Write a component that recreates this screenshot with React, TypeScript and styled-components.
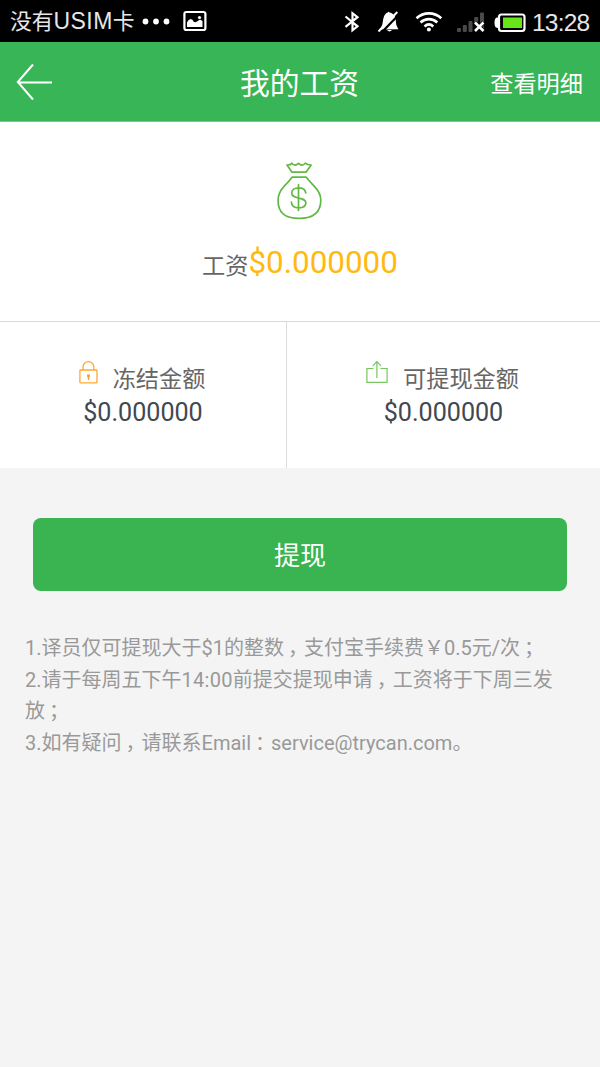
import React from "react";
import styled, { createGlobalStyle } from "styled-components";

const GlobalStyle = createGlobalStyle`
  * { box-sizing: border-box; }
  body {
    margin: 0;
    background: #f4f4f4;
    font-family: Roboto, "Noto Sans CJK SC", sans-serif;
    font-weight: 400;
  }
`;

const Screen = styled.div`
  width: 600px;
  min-height: 1067px;
  background: #f4f4f4;
`;

const StatusBar = styled.div`
  height: 42px;
  padding: 0 10px;
  display: flex;
  align-items: center;
  justify-content: space-between;
  background: #000;
  color: #e6e6e6;
  font-family: "Liberation Sans", "Noto Sans CJK SC", sans-serif;
`;

const StatusGroup = styled.div`
  display: flex;
  align-items: center;
  height: 42px;
  svg { display: block; flex: none; }
`;

const Carrier = styled.span`
  font-size: 21.8px;
  line-height: 42px;
  white-space: nowrap;
`;

const CarrierLatin = styled.span`
  font-size: 23px;
  letter-spacing: 0.4px;
`;

const Clock = styled.span`
  font-size: 24.5px;
  line-height: 42px;
  padding-top: 4px;
  letter-spacing: -0.8px;
  width: 58px;
  white-space: nowrap;
`;

const Header = styled.header`
  height: 80px;
  padding: 0 17px 0 16px;
  display: grid;
  grid-template-columns: 1fr auto 1fr;
  align-items: center;
  background: #38b556;
  color: #fff;
  border-bottom: 1px solid #74cb88;
  svg { display: block; }
`;

const Title = styled.h1`
  margin: 0;
  padding-top: 5px;
  font-size: 29.8px;
  line-height: 74px;
  font-weight: 400;
`;

const HeaderLink = styled.a`
  justify-self: end;
  padding-top: 5px;
  font-size: 23.2px;
  line-height: 74px;
`;

const Summary = styled.section`
  height: 200px;
  padding-top: 39px;
  display: flex;
  flex-direction: column;
  align-items: center;
  background: #fff;
  border-bottom: 1px solid #d9dadb;
`;

const SummaryLine = styled.div`
  display: flex;
  align-items: center;
  margin-top: 19px;
  height: 44px;
`;

const Label = styled.span`
  padding-top: 3px;
  font-size: 23.2px;
  color: #666;
  white-space: nowrap;
`;

const Total = styled.span`
  font-size: 31.4px;
  color: #ffb90f;
`;

const Split = styled.section`
  height: 146px;
  display: grid;
  grid-template-columns: 287px 1fr;
  background: #fff;
`;

const Cell = styled.div<{ $divided?: boolean }>`
  padding-top: 38px;
  display: flex;
  flex-direction: column;
  align-items: center;
  border-right: ${(p) => (p.$divided ? "1px solid #dcdddf" : "0")};
`;

const CellHead = styled.div<{ $gap: number }>`
  display: flex;
  gap: ${(p) => p.$gap}px;
  height: 36px;
  padding-right: 2px;
  line-height: 33px;
  svg { display: block; }
`;

const Amount = styled.div`
  font-size: 25.1px;
  line-height: 33px;
  color: #424751;
`;

const Action = styled.button`
  display: block;
  width: 534px;
  height: 73px;
  margin: 50px auto 0 33px;
  padding: 3px 0 0;
  border: 0;
  border-radius: 8px;
  background: #39b450;
  color: #fff;
  font: 400 26px/70px Roboto, "Noto Sans CJK SC", sans-serif;
`;

const Notes = styled.div`
  padding: 42px 25px 0;
  color: #999;
  font-size: 20px;
  line-height: 31.7px;
`;

const Note = styled.p`
  margin: 0;
`;

const Time = styled.span`
  letter-spacing: 0.3px;
`;

const Mark = styled.span`
  font-family: "Noto Sans CJK SC", sans-serif;
  font-feature-settings: "halt";
  line-height: 1;
  padding: 0 0.3em 0 0.2em;
`;

const MoreDots = () => (
  <svg width="48" height="42" viewBox="0 0 48 42" fill="#fff">
    <circle cx="10.500" cy="21.500" r="2.900" />
    <circle cx="21" cy="21.500" r="2.900" />
    <circle cx="31.500" cy="21.500" r="2.900" />
  </svg>
);

const PictureIcon = () => (
  <svg width="24" height="42" viewBox="0 0 24 42">
    <rect x="1.400" y="12" width="21" height="18" rx="2" fill="none" stroke="#fff" strokeWidth="2.200" />
    <path d="M4 27v-4.500q1-3 3.500-3.500 2.500 0 3 2.500 1.500 1.500 3.500 0l3-2 2.500 1.500v6z" fill="#fff" />
    <circle cx="16.500" cy="17.500" r="1.600" fill="#fff" />
  </svg>
);

const StatusIcons = () => (
  <svg width="192" height="42" viewBox="340 0 192 42" fill="none">
    <path d="M345.500 16.500l12 9.800-5 4V13.200l5 4-12 9.600" stroke="#fff" strokeWidth="2.200" />
    <path d="M379 29.500c4-3 3.500-7.500 4.500-11.500.8-3.200 2.500-5 4.200-5.500q.9-1.300 1.800 0c2.500.5 5.300 2.300 6 5.500.8 4-.2 6.500 3 11.300z" fill="#fff" />
    <path d="M387 30h5q-2.500 2.800-5 0z" fill="#fff" />
    <path d="M382.500 31.500L400 13.500" stroke="#000" strokeWidth="2.200" />
    <path d="M378.500 31.500L397.300 12" stroke="#fff" strokeWidth="2" />
    <g stroke="#fff" strokeWidth="2.600">
      <path d="M416.500 18.200c7-6.500 17.800-6.500 24.800 0" />
      <path d="M420.500 22.500c5-4.500 11.800-4.500 16.800 0" />
      <path d="M424.500 26.500c2.700-2.500 6.100-2.500 8.800 0" />
    </g>
    <circle cx="428.900" cy="29.500" r="2" fill="#fff" />
    <g fill="#4a4a4a">
      <rect x="457" y="28" width="4" height="4" rx="1" />
      <rect x="462.800" y="25" width="4" height="7" rx="1" />
      <rect x="468.500" y="21" width="4" height="11" rx="1" />
      <rect x="474.200" y="17" width="4" height="8" rx="1" />
      <rect x="480" y="12.500" width="4" height="19" rx="1" />
    </g>
    <path d="M475 22.500l8.500 8.500M483.500 22.500l-8.500 8.500" stroke="#000" strokeWidth="4" />
    <path d="M475 22.500l8.500 8.500M483.500 22.500l-8.500 8.500" stroke="#fff" strokeWidth="2.600" />
    <rect x="499" y="14.500" width="25.500" height="16.500" rx="2.500" stroke="#fff" strokeWidth="2.200" />
    <path d="M499 17.500h-1.500q-3 0-3 5.200t3 5.200h1.500z" fill="#fff" />
    <rect x="503" y="17.500" width="19" height="10.500" fill="#66e619" />
  </svg>
);

const BackArrow = () => (
  <svg width="38" height="38" viewBox="0 0 38 38" fill="none" stroke="#fff" strokeWidth="2">
    <path d="M17 1.500L1.800 19 17 36.500M2 19.500h34" />
  </svg>
);

const MoneyBag = () => (
  <svg width="48" height="60" viewBox="276 161 48 60" fill="none" stroke="#62b845" strokeWidth="1.700" strokeLinejoin="round" strokeLinecap="round">
    <path d="M292 172.200l-5-7.200q3.500.2 4.800-1.800 3 3.600 6.700.2 3.700 3.400 6.700-.2 2.300 2 6 1.800l-5.200 7.200z" />
    <path d="M292 177.200h14.300q2.700 3.500 7.600 8.600 6.900 6.900 6.900 14.200 0 18.400-21.600 18.400T278.100 200q0-7.500 6.400-14.200 5.100-5.100 7.500-8.600z" />
    <path d="M305.700 192.800c-.3-3-3-5-7-5s-7 2-7 5.200c0 7 14.200 3.200 14.200 9.800 0 3.200-3 5-7.200 5-4.500 0-7.200-2.200-7.300-5.800M298.500 184.500v26" strokeWidth="1.700" />
  </svg>
);

const LockIcon = () => (
  <svg width="19" height="24" viewBox="0 0 19 24" fill="none" stroke="#ffa834" strokeWidth="1.300">
    <rect x=".9" y="10" width="17.100" height="12.800" rx=".5" />
    <path d="M4 10V7a5.400 5.400 0 0 1 10.800 0v3" />
    <path d="M8 14.500h3v2l-.8 1v2.500H8.800v-2.500l-.8-1z" fill="#ff9d1e" stroke="none" />
  </svg>
);

const WithdrawIcon = () => (
  <svg width="22" height="24" viewBox="0 0 22 24" fill="none" stroke="#75c760" strokeWidth="1.200">
    <path d="M7.500 8.500H.9v13.800h20.200V8.500h-6.600M10.900 18V2M6.800 5.800L10.900 1.700 15 5.800" />
  </svg>
);

export default function App() {
  return (
    <Screen>
      <GlobalStyle />
      <StatusBar>
        <StatusGroup>
          <Carrier>没有<CarrierLatin>USIM</CarrierLatin>卡</Carrier>
          <MoreDots />
          <PictureIcon />
        </StatusGroup>
        <StatusGroup>
          <StatusIcons />
          <Clock>13:28</Clock>
        </StatusGroup>
      </StatusBar>
      <Header>
        <BackArrow />
        <Title>我的工资</Title>
        <HeaderLink>查看明细</HeaderLink>
      </Header>
      <Summary>
        <MoneyBag />
        <SummaryLine>
          <Label>工资</Label>
          <Total>$0.000000</Total>
        </SummaryLine>
      </Summary>
      <Split>
        <Cell $divided>
          <CellHead $gap={15}>
            <LockIcon />
            <Label>冻结金额</Label>
          </CellHead>
          <Amount>$0.000000</Amount>
        </Cell>
        <Cell>
          <CellHead $gap={15}>
            <WithdrawIcon />
            <Label>可提现金额</Label>
          </CellHead>
          <Amount>$0.000000</Amount>
        </Cell>
      </Split>
      <Action>提现</Action>
      <Notes>
        <Note>1.译员仅可提现大于$1的整数<Mark>，</Mark>支付宝手续费￥0.5元/次<Mark>；</Mark></Note>
        <Note>2.请于每周五下午<Time>14:00</Time>前提交提现申请<Mark>，</Mark>工资将于下周三发放<Mark>；</Mark></Note>
        <Note>3.如有疑问<Mark>，</Mark>请联系Email<Mark>：</Mark>service@trycan.com。</Note>
      </Notes>
    </Screen>
  );
}
